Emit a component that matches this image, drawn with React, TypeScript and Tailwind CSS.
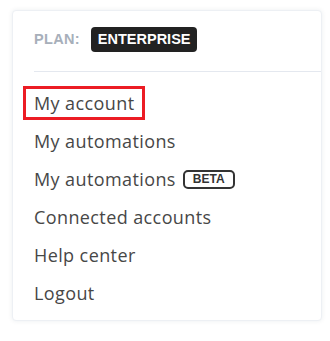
const items = [
  { label: 'My account', active: true },
  { label: 'My automations' },
  { label: 'My automations', beta: true },
  { label: 'Connected accounts' },
  { label: 'Help center' },
  { label: 'Logout' },
];

export default function App() {
  return (
    <div className="w-[330px] h-[341px] bg-white font-['Open_Sans',sans-serif] pt-[10px] pl-[12px]">
      <div className="w-[310px] h-[311px] bg-white border border-[#edf0f4] rounded-[4px] shadow-[0_0_5px_rgba(30,50,80,0.08)]">
        <div className="flex items-center gap-[11px] pl-[21px] pt-[16px] pb-[19px]">
          <span className="font-['Liberation_Sans',sans-serif] font-bold text-[14.5px] text-[#a7afba] tracking-[0.3px]">PLAN:</span>
          <span className="font-['Liberation_Sans',sans-serif] font-bold text-[14.5px] text-white bg-[#222222] rounded-[4px] h-[25px] px-[7px] flex items-center">
            ENTERPRISE
          </span>
        </div>
        <div className="ml-[21px] border-b border-[#e4e8ef]" />
        <ul className="pt-[12px]">
          {items.map((it, i) => (
            <li key={i} className="h-[38px] flex items-center">
              <div
                className={
                  it.active
                    ? 'ml-[10px] pl-[8px] pr-[8px] h-[34px] flex items-center border-[3px] border-[#ec1c24]'
                    : 'ml-[21px] flex items-center'
                }
              >
                <span className="text-[18px] tracking-[0.4px] text-[#474747]">{it.label}</span>
                {it.beta && (
                  <span className="ml-[7px] h-[19px] px-[8px] flex items-center border-2 border-[#333333] rounded-[5px] font-['Liberation_Sans',sans-serif] font-bold text-[12px] text-[#333333]">
                    BETA
                  </span>
                )}
              </div>
            </li>
          ))}
        </ul>
      </div>
    </div>
  );
}
